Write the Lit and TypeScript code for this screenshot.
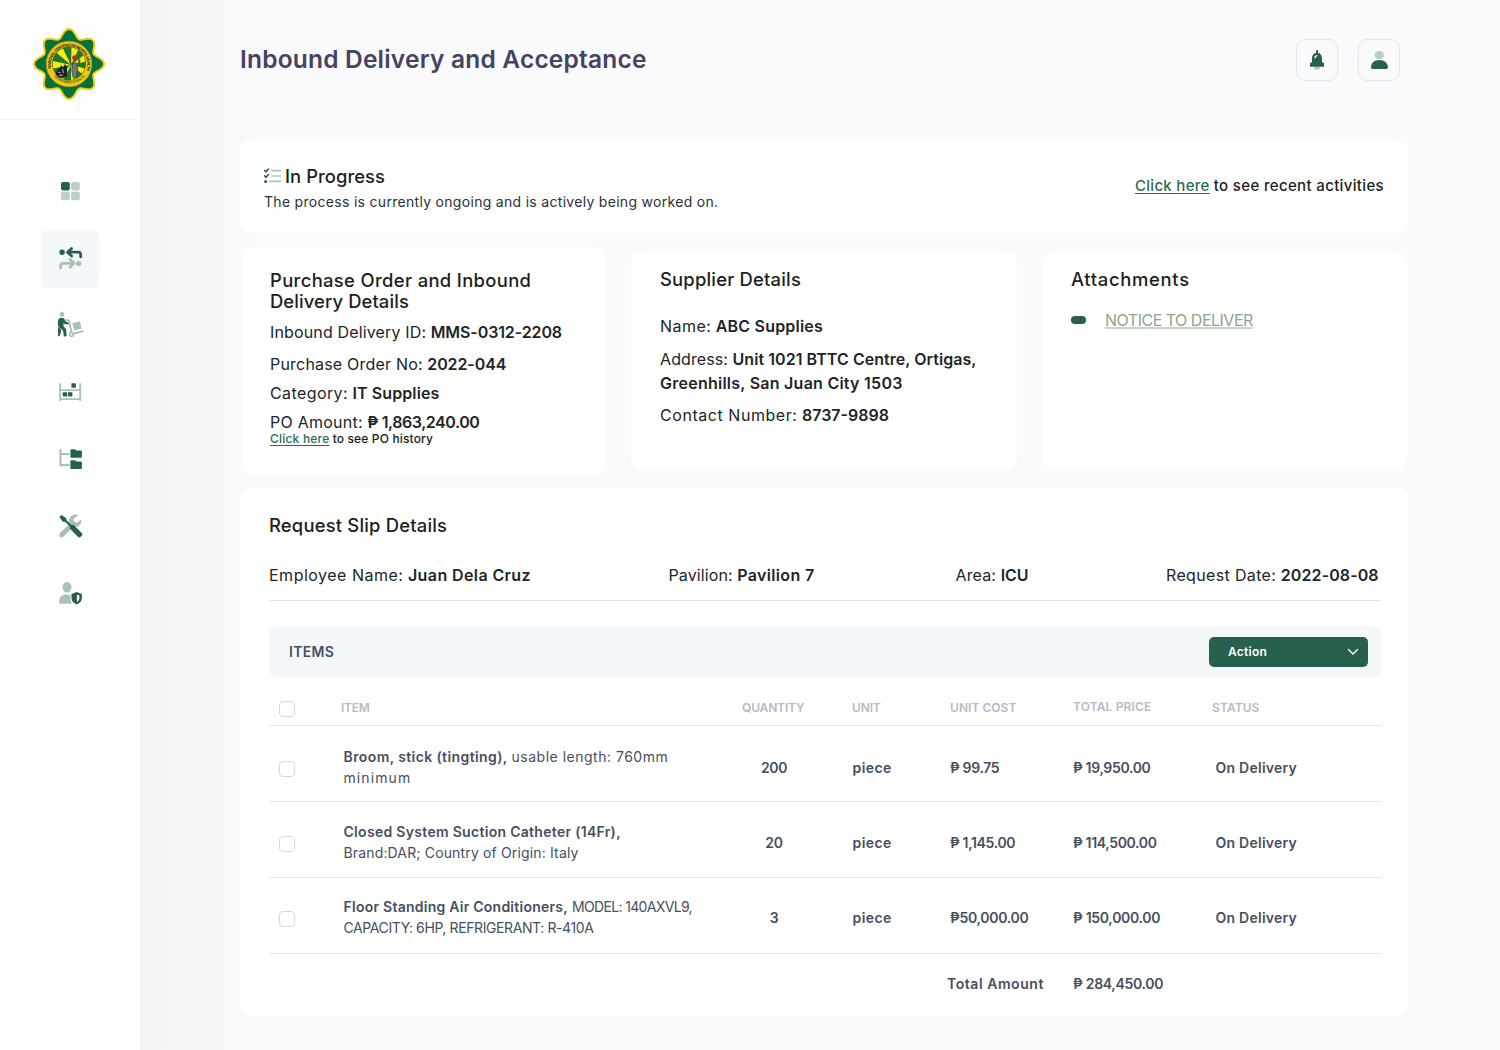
import { LitElement, html, css, svg, unsafeCSS } from "lit";
import { customElement, property } from "lit/decorators.js";

/* Tracking scale: .k0 is neutral, each step adds 0.05px (.km* is negative). */
const trackingCss = Array.from({ length: 48 }, (_, i) => i - 20)
  .map((n) => `.k${n < 0 ? "m" + -n : n}{letter-spacing:${(n * 0.05).toFixed(2)}px}`)
  .join("");
const tracking = unsafeCSS(trackingCss);

const k = (px: number) => {
  const n = Math.round(px / 0.05);
  return n < 0 ? `k${"m" + -n}` : `k${n}`;
};
const t = (text: string, px = 0) => html`<span class=${k(px)}>${text}</span>`;
const b = (text: string, px = 0) => html`<b class=${k(px)}>${text}</b>`;

const D = "#27604e";
const L = "#a9c1b9";

/* ---------- icons ---------- */
const navIcons = [
  svg`<rect x="5" y="4" width="8.8" height="8.4" rx="1.8" fill=${D}/>
    <rect x="15" y="4" width="8.8" height="8.4" rx="1.8" fill="#bccfc8"/>
    <rect x="5" y="13.8" width="8.8" height="8.4" rx="1.8" fill="#bccfc8"/>
    <rect x="15" y="13.8" width="8.8" height="8.4" rx="1.8" fill="#bccfc8"/>`,
  svg`<g fill="none" stroke-width="2.7" stroke-linecap="round" stroke-linejoin="round">
      <path d="M4.6 23V20.9a2.6 2.6 0 0 1 2.6-2.6H18M14 14.4l4.2 3.9-4.2 3.9" stroke=${L}/>
      <path d="M24.7 11.9V9.8a2.6 2.6 0 0 0-2.6-2.6H11.6M15.6 3.4l-4.2 3.8 4.2 3.9" stroke=${D}/>
    </g>
    <circle cx="6.1" cy="7.3" r="2.7" fill=${D}/><circle cx="22.7" cy="18.6" r="2.7" fill=${L}/>`,
  svg`<circle cx="6" cy="2.4" r="2.3" fill=${L}/>
    <path d="M2 8.500c.5-1.900 2-2.800 3.600-2.700 1.600.1 2.700.8 3.300 2l1.200 2.200 2.600.3v2.300l-4-.5-1.200-1.200v3.400l2.500 2.600.7 7.400-2.800.3-.9-6.200-3.600-3-1.400-2z" fill=${D}/>
    <path d="M2 14.500l3.200 3.200-.5 3.300-1.200 3.600-1.500-.6z" fill=${D}/>
    <path d="M10.800 8.300l1.900.3 3 12M17.300 21.800l9.300-2.500" stroke=${L} stroke-width="2" fill="none" stroke-linecap="round" stroke-linejoin="round"/>
    <circle cx="15.500" cy="22.400" r="1.900" fill="none" stroke=${L} stroke-width="1.600"/>
    <rect x="17.200" y="10.200" width="7.700" height="7.500" rx=".7" fill=${L} transform="rotate(-14 21 14)"/>`,
  svg`<path d="M4.200 4.300v17.600M24.200 4.300v17.600" stroke=${L} stroke-width="1.900"/>
    <path d="M4.200 11.100h20M4.200 20.100h20" stroke=${L} stroke-width="1.700"/>
    <rect x="15.400" y="4.300" width="4.500" height="4.400" rx=".4" fill=${D}/>
    <rect x="6.700" y="13.200" width="4.400" height="4.200" rx=".4" fill=${D}/>
    <rect x="12" y="13.200" width="4.400" height="4.200" rx=".4" fill=${D}/>`,
  svg`<path d="M4.500 3.200v15.900h9M4.500 8h9" stroke=${L} stroke-width="2.200" fill="none"/>
    <path d="M14.400 4.200a1 1 0 0 1 1-1h3.400l1.500 1.300h4.600a1 1 0 0 1 1 1v5.300a1 1 0 0 1-1 1h-9.500a1 1 0 0 1-1-1z" fill=${D}/>
    <path d="M14.400 15.300a1 1 0 0 1 1-1h3.400l1.500 1.300h4.600a1 1 0 0 1 1 1v5.300a1 1 0 0 1-1 1h-9.500a1 1 0 0 1-1-1z" fill=${D}/>`,
  svg`<path d="M5.700 21.700L16 11.800" stroke=${L} stroke-width="5" stroke-linecap="round"/>
    <path d="M22.400 2.500a6.200 6.200 0 1 0 3 5.600c0-.8-.1-1.300-.3-1.800l-3.600 3.200-3.200-.8-.7-3z" fill=${L}/>
    <path d="M3.400 4l2.100-1.900 4.600 2.900.6 2.400 4.900 4.600 1.800-.2 8.900 8.700c1.100 1.300-2.500 4.900-3.900 3.700l-8.600-8.700.1-1.900-4.700-4.600-2.600-.6z" fill=${D}/>`,
  svg`<ellipse cx="11" cy="7.300" rx="4.500" ry="5.300" fill=${L}/>
    <path d="M3.300 23.700v-2.400c0-4.300 2.500-6.900 7.200-6.900 1.600 0 2.900.2 4 .8v4c0 1.800.5 3.300 1.300 4.500z" fill=${L}/>
    <path d="M20.700 12.100l5.200 1.800v3.800c0 3.300-2.100 5.500-5.200 6.700-3.100-1.200-5.200-3.400-5.200-6.700v-3.800z" fill=${D}/>
    <path d="M20.900 14.700l2.500.9v2.500c0 1.800-.9 3.100-2.500 4z" fill="#fff"/>`,
];

const bellIcon = svg`<path d="M18 27.500a3 3.600 0 0 0 6 0z" fill="#b6cac3"/>
  <path d="M20.100 11h1.900v2.700c2.700.7 4 3 4 5.600v4l2.100.7v3.800H14v-3.800l2-.7v-4c0-2.600 1.400-4.900 4.100-5.600z" fill=${D}/>
  <path d="M21.300 16v1.500h-1.500v1.800h-1.600c.1-2 1.100-3.200 3.100-3.300z" fill="#fff"/>`;
const userIcon = svg`<ellipse cx="21.200" cy="16" rx="4.600" ry="4.100" fill="#b9cbc5"/>
  <path d="M13 28.300c0-4.200 3.200-7.400 8.300-7.400s8.600 3.200 8.600 7.400c0 1-.6 1.600-1.600 1.600H14.600c-1 0-1.600-.6-1.600-1.600z" fill=${D}/>`;

/* Eight-lobed emblem outline. */
const starPath =
  "M" +
  Array.from({ length: 160 }, (_, i) => {
    const a = (i / 160) * Math.PI * 2;
    const r = 30.500 + 3.900 * Math.cos(8 * a) + 0.600 * Math.cos(4 * a);
    return `${(36 + r * Math.cos(a)).toFixed(2)} ${(36 + r * Math.sin(a)).toFixed(2)}`;
  }).join("L") +
  "Z";
const rays = Array.from({ length: 7 }, (_, i) => {
  const a = (i / 7) * Math.PI * 2 + 0.250;
  const p = (x: number) => `${(38 + 24 * Math.cos(x)).toFixed(1)} ${(37 + 24 * Math.sin(x)).toFixed(1)}`;
  return `M38 37L${p(a)}L${p(a + 0.420)}Z`;
}).join("");

@customElement("mms-sidebar")
export class MmsSidebar extends LitElement {
  @property({ type: Number }) active = 1;
  static styles = css`
    :host { display: block; width: 140px; background: #fff; font-family: "Liberation Sans", sans-serif; }
    .brand { box-sizing: border-box; height: 120px; padding: 28px 0 0 33px; border-bottom: 1px solid #f3f3f6; }
    .brand svg { display: block; }
    nav { display: flex; flex-direction: column; align-items: center; gap: 9px; padding-top: 43px; }
    .item { width: 58px; height: 58px; border-radius: 5px; display: flex; justify-content: center; padding-top: 15px; box-sizing: border-box; }
    .item.active { background: #f4f8fb; }
    .ring { font-weight: 700; font-size: 4.200px; fill: #16351f; }
    .ring.small { font-size: 3.600px; font-weight: 400; }
  `;
  render() {
    return html`
      <div class="brand">
        <svg width="72" height="72" viewBox="0 0 72 72">
          <path d=${starPath} fill="#04703a" stroke="#f7cf12" stroke-width="2"/>
          <circle cx="36" cy="36" r="22.800" fill="#f5c816"/>
          <circle cx="36" cy="36" r="22.800" fill="none" stroke="#c79a12" stroke-width=".6"/>
          <circle cx="36" cy="35.600" r="16.600" fill="#1d7a2c" stroke="#3a4a14" stroke-width=".5"/>
          <clipPath id="c"><circle cx="36" cy="35.600" r="16.300"/></clipPath>
          <path d=${rays} fill="#f4ec1c" clip-path="url(#c)"/>
          <path d="M22.500 46l2-4 2.500-2 1-3 2 2.500 2-3.500 2 3v9.500l-4 1.500-4-.5z" fill="#1d1f24"/>
          <path d="M25 44l2.500 1M29.500 41l1 4M26 47.500l4-.5" stroke="#b9b2ae" stroke-width="1"/>
          <path d="M37.500 31c-1.500 4 1 6 4 6s6-2 4.500-6" fill="none" stroke="#55585a" stroke-width="1.800"/>
          <path d="M39.700 35h4l1 7-1.500 8h-3l-1.500-8z" fill="#77746a" stroke="#2c2e2c" stroke-width=".6"/>
          <circle cx="41.700" cy="29.800" r="2.500" fill="#d02b20"/>
          <path id="top" d="M18.500 42.300A18.300 18.300 0 1 1 53.500 42.300" fill="none"/>
          <path id="bottom" d="M19.500 46.600A20.700 20.700 0 0 0 53.500 46.600" fill="none"/>
          <text class="ring"><textPath href="#top" textLength="66" startOffset="2">NATIONAL CENTER FOR MENTAL HEALTH</textPath></text>
          <text class="ring small"><textPath href="#bottom" textLength="36" startOffset="2">DEPARTMENT OF HEALTH</textPath></text>
        </svg>
      </div>
      <nav>
        ${navIcons.map((icon, i) => html`<div class=${i === this.active ? "item active" : "item"}>
          <svg width="28" height="28" viewBox="0 0 28 28">${icon}</svg>
        </div>`)}
      </nav>`;
  }
}

interface Item {
  name: [string, number];
  desc: [string, number];
  rest: [string, number];
  qty: [string, number];
  cost: [string, number];
  total: [string, number];
}
const items: Item[] = [
  { name: ["Broom, stick (tingting),", 0.400], desc: ["usable length: 760mm", 0.500], rest: ["minimum", 1.100], qty: ["200", -0.350], cost: ["₱ 99.75", -0.350], total: ["₱ 19,950.00", -0.350] },
  { name: ["Closed System Suction Catheter (14Fr),", 0.300], desc: ["", 0], rest: ["Brand:DAR; Country of Origin: Italy", 0.150], qty: ["20", -0.300], cost: ["₱ 1,145.00", -0.350], total: ["₱ 114,500.00", -0.350] },
  { name: ["Floor Standing Air Conditioners,", 0.250], desc: ["MODEL: 140AXVL9,", -0.650], rest: ["CAPACITY: 6HP, REFRIGERANT: R-410A", -0.400], qty: ["3", -0.500], cost: ["₱50,000.00", -0.300], total: ["₱ 150,000.00", -0.300] },
];

@customElement("app-root")
export class AppRoot extends LitElement {
  static styles = css`
    ${tracking}
    :host { display: flex; height: 1050px; width: 1500px; overflow: hidden; font-family: Inter, "Open Sans", sans-serif; color: #212529; background: #f9fafc; }
    b { font-weight: 600; }
    main { flex: 1; padding: 0 92px 0 100px; background: linear-gradient(90deg, #f3f4f6 0, #f6f7f9 50px, #f9fafc 115px); display: flex; flex-direction: column; }
    header { height: 140px; display: flex; justify-content: space-between; padding-right: 8px; box-sizing: border-box; }
    h1 { margin: 43px 0 0; font-size: 24.500px; line-height: 32px; font-weight: 600; color: #46425f; white-space: nowrap; }
    .tools { display: flex; gap: 20px; padding-top: 39px; }
    .tool { width: 40px; height: 40px; border: 1px solid #e4e5f0; border-radius: 9px; display: flex; align-items: center; justify-content: center; }
    .tool svg { flex: none; }
    .card { background: #fff; border-radius: 11px; box-sizing: border-box; }
    .link { color: #2c6b53; text-decoration: underline; text-decoration-thickness: 1px; text-underline-offset: 2px; }
    h2 { margin: 0; font-size: 18.400px; line-height: 21px; font-weight: 500; color: #1d1e20; white-space: nowrap; }

    .status { height: 93px; padding: 26px 24px 0; display: flex; justify-content: space-between; }
    .status-title { display: flex; gap: 4px; }
    .status-title svg { margin-top: 2px; }
    .status-text { font-size: 14px; line-height: 20px; margin-top: 5px; color: #2d3036; }
    .recent { font-size: 15px; line-height: 20px; font-weight: 500; margin-top: 10px; color: #1b1d20; }

    .trio { display: grid; grid-template-columns: 365px 386px 365px; column-gap: 25px; align-items: center; margin: 14px 0 14px 1px; height: 227px; }
    .order { height: 227px; padding: 23px 29px 0; }
    .side { height: 217px; padding: 17px 29px 0; }
    .line { font-size: 16px; line-height: 24px; white-space: nowrap; }
    .order .line { margin-top: 5px; }
    .order .line.first { margin-top: 8px; }
    .order .line.second { margin-top: 8px; }
    .history { font-size: 12px; line-height: 14px; margin-top: -2px; font-weight: 500; color: #16181a; }
    .side .line.name { margin-top: 24px; }
    .side .line.address { margin-top: 9px; }
    .side .line.contact { margin-top: 8px; }
    .attachment { display: flex; align-items: center; gap: 19px; margin-top: 18px; }
    .dot { width: 15px; height: 8px; border-radius: 4px; background: #27604e; }
    .notice { color: #8ca68d; text-decoration: underline; text-decoration-color: #c6d5ca; text-decoration-thickness: 2px; text-underline-offset: 1px; }

    .slip { height: 527px; padding: 27px 26px 0 29px; }
    .meta { display: grid; grid-template-columns: 399.500px 287px 210.500px 1fr; width: 1112px; margin-top: 27px; height: 37px; border-bottom: 1px solid #e3e4ea; }
    .bar { height: 50px; margin-top: 26px; width: 1113px; box-sizing: border-box; padding: 0 14px 0 20px; border-radius: 6px; background: #f4f8fb; display: flex; align-items: center; justify-content: space-between; font-size: 14px; font-weight: 600; color: #464f60; }
    .bar > span { padding-bottom: 2px; }
    .action { width: 159px; height: 30px; border-radius: 5px; box-sizing: border-box; padding: 0 9px 0 19px; background: #28604e; color: #fff; display: flex; align-items: center; justify-content: space-between; font-size: 12px; }
    .action > span { padding-bottom: 1px; }
    .row { display: grid; grid-template-columns: 72px 401px 64px 46px 98px 123px 139px 1fr; width: 1112px; box-sizing: border-box; height: 76px; align-items: center; border-bottom: 1px solid #e6e7ea; font-size: 14px; line-height: 21px; color: #464f60; font-weight: 600; white-space: nowrap; }
    .head { height: 49px; padding-top: 12px; font-size: 12px; color: #bab9c8; }
    .head .up { margin-top: -2px; }
    .r0 { padding-top: 8px; }
    .r1 { padding-top: 6px; }
    .r2 { padding-top: 4px; }
    .check { width: 14px; height: 14px; border: 1px solid #d6d7da; border-radius: 4px; margin: 2px 0 0 10px; background: #fff; }
    .head .check { margin-top: 4px; }
    .desc { padding: 0 0 1px 2.500px; font-weight: 400; }
    .qty { text-align: center; }
    .status-cell { padding-left: 3.500px; }
    .unit { grid-column: 5; }
    .unit.value { padding-left: .5px; }
    .sum { display: grid; grid-template-columns: 678px 126px 1fr; margin-top: 19px; font-size: 14px; line-height: 21px; font-weight: 600; color: #464f60; }
    .c6 { grid-column: 6; }
  `;
  render() {
    return html`
      <mms-sidebar></mms-sidebar>
      <main>
        <header>
          <h1>${t("Inbound Delivery and Acceptance", 0.200)}</h1>
          <div class="tools">
            <div class="tool"><svg width="42" height="42" viewBox="0 0 42 42">${bellIcon}</svg></div>
            <div class="tool"><svg width="42" height="42" viewBox="0 0 42 42">${userIcon}</svg></div>
          </div>
        </header>

        <section class="card status">
          <div>
            <div class="status-title">
              <svg width="17" height="17" viewBox="0 0 17 17" fill="none" stroke-linecap="round">
                <path d="M.700 2.400l1.300 1.400L4.400 1M.700 7.900l1.300 1.400 2.400-2.800" stroke=${D} stroke-width="1.500"/>
                <circle cx="1.600" cy="13.400" r="1.500" fill=${D}/>
                <path d="M8 2.700h8.400M8 8h8.400M6 13.400h10.400" stroke=${L} stroke-width="1.700"/>
              </svg>
              <h2>${t("In Progress", 0.050)}</h2>
            </div>
            <div class="status-text">${t("The process is currently ongoing and is actively being worked on.", 0.300)}</div>
          </div>
          <div class="recent"><span class="link k6">Click here</span> ${t("to see recent activities", 0.350)}</div>
        </section>

        <div class="trio">
          <section class="card order">
            <h2>${t("Purchase Order and Inbound", 0.350)}</h2>
            <h2>${t("Delivery Details", 0.100)}</h2>
            <div class="line first">${t("Inbound Delivery ID:", 0.150)} ${b("MMS-0312-2208", -0.100)}</div>
            <div class="line second">${t("Purchase Order No:", 0.200)} ${b("2022-044", -0.100)}</div>
            <div class="line">${t("Category:", 0.400)} ${b("IT Supplies", 0.100)}</div>
            <div class="line">${t("PO Amount:", 0.250)} ${b("₱ 1,863,240.00", -0.450)}</div>
            <div class="history"><span class="link k4">Click here</span> ${t("to see PO history", 0.150)}</div>
          </section>
          <section class="card side">
            <h2>${t("Supplier Details", 0.200)}</h2>
            <div class="line name">${t("Name:", 0.450)} ${b("ABC Supplies", 0.200)}</div>
            <div class="line address">${t("Address:", 0.100)} ${b("Unit 1021 BTTC Centre, Ortigas,", 0.050)}<br />${b("Greenhills, San Juan City 1503", 0.250)}</div>
            <div class="line contact">${t("Contact Number:", 0.550)} ${b("8737-9898", 0)}</div>
          </section>
          <section class="card side">
            <h2>${t("Attachments", 0.700)}</h2>
            <div class="attachment line"><span class="dot"></span><span class="notice km10">NOTICE TO DELIVER</span></div>
          </section>
        </div>

        <section class="card slip">
          <h2>${t("Request Slip Details", 0.200)}</h2>
          <div class="meta line">
            <div>${t("Employee Name:", 0.500)} ${b("Juan Dela Cruz", 0.400)}</div>
            <div>${t("Pavilion:", 0.100)} ${b("Pavilion 7", 0.350)}</div>
            <div>${t("Area:", 0.150)} ${b("ICU", 0)}</div>
            <div>${t("Request Date:", 0.350)} ${b("2022-08-08", 0.100)}</div>
          </div>
          <div class="bar">
            ${t("ITEMS", 0.300)}
            <div class="action">${t("Action", 0.250)}
              <svg width="12" height="8" viewBox="0 0 12 8" fill="none" stroke="#fff" stroke-width="1.400" stroke-linecap="round" stroke-linejoin="round"><path d="M1.500 1.600L6 6l4.500-4.400"/></svg>
            </div>
          </div>
          <div class="row head">
            <div class="check"></div>
            <div>${t("ITEM", -0.250)}</div>
            <div>${t("QUANTITY", -0.150)}</div>
            <div class="unit">${t("UNIT", -0.150)}</div>
            <div class="c6">${t("UNIT COST", 0.050)}</div>
            <div class="up">${t("TOTAL PRICE", 0.150)}</div>
            <div>${t("STATUS", 0.100)}</div>
          </div>
          ${items.map((it, i) => html`<div class="row r${i}">
            <div class="check"></div>
            <div class="desc">${b(...it.name)} ${t(...it.desc)}<br />${t(...it.rest)}</div>
            <div class="qty">${t(...it.qty)}</div>
            <div class="unit value">${t("piece", 0.400)}</div>
            <div class="c6">${t(...it.cost)}</div>
            <div>${t(...it.total)}</div>
            <div class="status-cell">${t("On Delivery", 0.250)}</div>
          </div>`)}
          <div class="sum">
            <span></span>
            ${t("Total Amount", 0.550)}
            ${t("₱ 284,450.00", -0.300)}
          </div>
        </section>
      </main>`;
  }
}
